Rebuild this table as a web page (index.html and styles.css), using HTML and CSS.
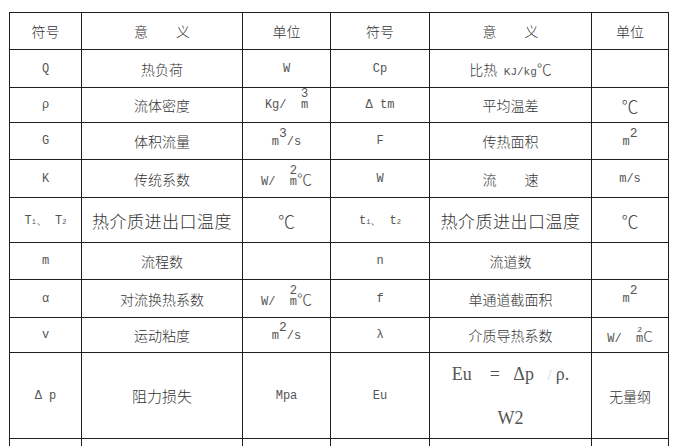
FILE: index.html
```html
<!DOCTYPE html>
<html lang="zh">
<head>
<meta charset="utf-8">
<title>符号表</title>
<link rel="stylesheet" href="styles.css">
</head>
<body>
<table class="sym">
  <colgroup>
    <col class="c1"><col class="c2"><col class="c3"><col class="c4"><col class="c5"><col class="c6">
  </colgroup>
  <tr class="r-head">
    <td class="zh">符号</td><td class="zh">意&emsp;&emsp;义</td><td class="zh">单位</td>
    <td class="zh">符号</td><td class="zh">意&emsp;&emsp;义</td><td class="zh">单位</td>
  </tr>
  <tr class="r38">
    <td class="mo">Q</td><td class="zh">热负荷</td><td class="mo">W</td>
    <td class="mo">Cp</td><td class="zh">比热<span class="mo sm"> KJ/kg</span><span class="deg">℃</span></td><td></td>
  </tr>
  <tr class="r35">
    <td class="mo">ρ</td><td class="zh">流体密度</td><td class="mo">Kg/&nbsp; <span class="stk"><span class="n">3</span>m</span></td>
    <td class="mo">Δ tm</td><td class="zh">平均温差</td><td class="deg big">℃</td>
  </tr>
  <tr class="r37">
    <td class="mo">G</td><td class="zh">体积流量</td><td class="mo">m<span class="sup">3</span>/s</td>
    <td class="mo">F</td><td class="zh">传热面积</td><td class="mo">m<span class="sup">2</span></td>
  </tr>
  <tr class="r38">
    <td class="mo">K</td><td class="zh">传统系数</td><td class="mo">W/&nbsp; <span class="stk"><span class="n">2</span>m</span><span class="deg">℃</span></td>
    <td class="mo">W</td><td class="zh">流&emsp;&emsp;速</td><td class="mo">m/s</td>
  </tr>
  <tr class="r45">
    <td class="mo">T<span class="sub">1</span>、 T<span class="sub">2</span></td><td class="zh lg">热介质进出口温度</td><td class="deg big">℃</td>
    <td class="mo">t<span class="sub">1</span>、 t<span class="sub">2</span></td><td class="zh lg">热介质进出口温度</td><td class="deg big">℃</td>
  </tr>
  <tr class="r37">
    <td class="mo">m</td><td class="zh">流程数</td><td></td>
    <td class="mo">n</td><td class="zh">流道数</td><td></td>
  </tr>
  <tr class="r38">
    <td class="mo">α</td><td class="zh">对流换热系数</td><td class="mo">W/&nbsp; <span class="stk"><span class="n">2</span>m</span><span class="deg">℃</span></td>
    <td class="mo">f</td><td class="zh">单通道截面积</td><td class="mo">m<span class="sup">2</span></td>
  </tr>
  <tr class="r35">
    <td class="mo">v</td><td class="zh">运动粘度</td><td class="mo">m<span class="sup">2</span>/s</td>
    <td class="mo">λ</td><td class="zh">介质导热系数</td><td class="mo">W/&nbsp; <span class="stk"><span class="n tiny">2</span>m</span><span class="deg">C</span></td>
  </tr>
  <tr class="r86">
    <td class="mo">Δ p</td><td class="zh lg2">阻力损失</td><td class="mo">Mpa</td>
    <td class="mo">Eu</td>
    <td class="formula"><div class="fl1">Eu&nbsp;&nbsp;&nbsp; =&nbsp;&nbsp; Δp&nbsp;&nbsp; <span class="faint">/</span> ρ.</div><div class="fl2">W2</div></td>
    <td class="zh">无量纲</td>
  </tr>
  <tr class="r-last">
    <td></td><td></td><td></td><td></td><td></td><td></td>
  </tr>
</table>
</body>
</html>
```

FILE: styles.css
```css
html, body {
  margin: 0;
  padding: 0;
  background: #ffffff;
}

.sym {
  margin: 12px 0 0 9px;
  border-collapse: collapse;
  table-layout: fixed;
  width: 659px;
  color: #3a3a3a;
}

.c1 { width: 72px; }
.c2 { width: 161px; }
.c3 { width: 88px; }
.c4 { width: 99px; }
.c5 { width: 162px; }
.c6 { width: 77px; }

.sym td {
  border: 1px solid #1e1e1e;
  padding: 0;
  text-align: center;
  vertical-align: middle;
  overflow: hidden;
  white-space: nowrap;
}

.r-head td { height: 36px; }
.r38 td { height: 37px; }
.r35 td { height: 34px; }
.r37 td { height: 36px; }
.r45 td { height: 44px; }
.r86 td { height: 85px; }
.r-last td { height: 30px; }

.zh {
  font-family: "Noto Sans CJK SC", sans-serif;
  font-size: 14px;
  font-weight: 300;
  color: #333;
}

.zh.lg {
  font-size: 17px;
  letter-spacing: 0.5px;
}

.zh.lg2 {
  font-size: 15px;
}

.mo {
  font-family: "Liberation Mono", "DejaVu Sans Mono", monospace;
  font-size: 12px;
  color: #555;
}

.mo.sm {
  font-size: 11px;
}

.deg {
  font-family: "Noto Sans CJK SC", sans-serif;
  font-weight: 300;
  font-size: 15px;
  color: #444;
}

.deg.big {
  font-size: 17px;
}

.sup {
  font-size: 13px;
  position: relative;
  top: -8px;
}

.sub {
  font-size: 7px;
}

.stk {
  position: relative;
  display: inline-block;
}

.stk .n {
  position: absolute;
  left: 0;
  right: 0;
  top: -11px;
  text-align: center;
  font-size: 12px;
}

.stk .n.tiny {
  top: -7px;
  font-size: 8px;
}

.formula {
  font-family: "Liberation Serif", "DejaVu Serif", serif;
  font-size: 18px;
  color: #555;
}

.fl1 {
  line-height: 20px;
}

.fl2 {
  margin-top: 22px;
  line-height: 20px;
}

.faint {
  color: #ccc;
  font-size: 14px;
}
```
